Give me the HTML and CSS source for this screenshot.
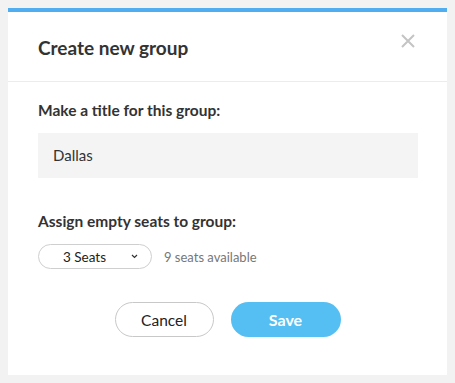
FILE: index.html
```html
<!DOCTYPE html>
<html>
<head>
<meta charset="utf-8">
<link rel="stylesheet" href="styles.css">
</head>
<body>
<div class="modal">
  <div class="modal-header">
    <h2 class="modal-title">Create new group</h2>
    <button class="close" aria-label="Close">
      <svg width="14" height="14" viewBox="0 0 14 14"><path d="M1 1L13 13M13 1L1 13" stroke="#c4c4c4" stroke-width="2" fill="none"/></svg>
    </button>
  </div>
  <div class="modal-body">
    <label class="field-label">Make a title for this group:</label>
    <div class="text-input">Dallas</div>
    <label class="field-label second">Assign empty seats to group:</label>
    <div class="seat-row">
      <div class="select">
        <span>3 Seats</span>
        <svg class="chev" width="7" height="5" viewBox="0 0 7 5"><path d="M1 1L3.5 3.5L6 1" stroke="#333" stroke-width="1.2" fill="none"/></svg>
      </div>
      <span class="avail">9 seats available</span>
    </div>
    <div class="actions">
      <button class="btn btn-cancel">Cancel</button>
      <button class="btn btn-save">Save</button>
    </div>
  </div>
</div>
</body>
</html>
```
FILE: styles.css
```css
html, body { margin: 0; padding: 0; }
body {
  background: #f2f2f2;
  padding: 8px;
  font-family: Lato, "Open Sans", sans-serif;
  color: #333;
}
.modal {
  background: #fff;
  border-top: 4px solid #4fadf0;
  height: 363px;
}
.modal-header {
  display: flex;
  justify-content: space-between;
  align-items: flex-start;
  padding: 0 30px 0 30px;
  height: 69px;
  border-bottom: 1px solid #ececec;
}
.modal-title {
  margin: 24px 0 0 0;
  font-size: 19px;
  font-weight: 700;
  color: #333;
  line-height: 24px;
}
.close {
  margin: 22px 2px 0 0;
  padding: 0;
  border: none;
  background: none;
  width: 14px;
  height: 14px;
}
.close svg { display: block; }
.modal-body {
  padding: 18px 29px 0 30px;
}
.field-label {
  display: block;
  font-size: 15.5px;
  font-weight: 700;
  line-height: 20px;
  color: #333;
}
.text-input {
  margin-top: 13px;
  background: #f4f4f4;
  height: 45px;
  line-height: 45px;
  padding-left: 15px;
  font-size: 15px;
  color: #333;
}
.field-label.second { margin-top: 33px; }
.seat-row {
  margin-top: 13px;
  display: flex;
  align-items: center;
}
.select {
  box-sizing: border-box;
  width: 114px;
  height: 25px;
  border: 1px solid #cfcfcf;
  border-radius: 13px;
  display: flex;
  align-items: center;
  padding-left: 24px;
  font-size: 13.5px;
  color: #222;
}
.select .chev { margin-left: 25px; }
.avail {
  margin-left: 12px;
  font-size: 13px;
  color: #777;
}
.actions {
  margin-top: 33px;
  display: flex;
  justify-content: center;
  gap: 17px;
  padding-right: 1px;
}
.btn {
  font-family: Lato, "Open Sans", sans-serif;
  font-size: 15.5px;
  height: 35px;
  border-radius: 18px;
  cursor: pointer;
}
.btn-cancel {
  width: 99px;
  background: #fff;
  border: 1px solid #c8c8c8;
  color: #222;
}
.btn-save {
  width: 110px;
  background: #55bff3;
  border: none;
  color: #fff;
  font-weight: 700;
  font-size: 16px;
}
```
